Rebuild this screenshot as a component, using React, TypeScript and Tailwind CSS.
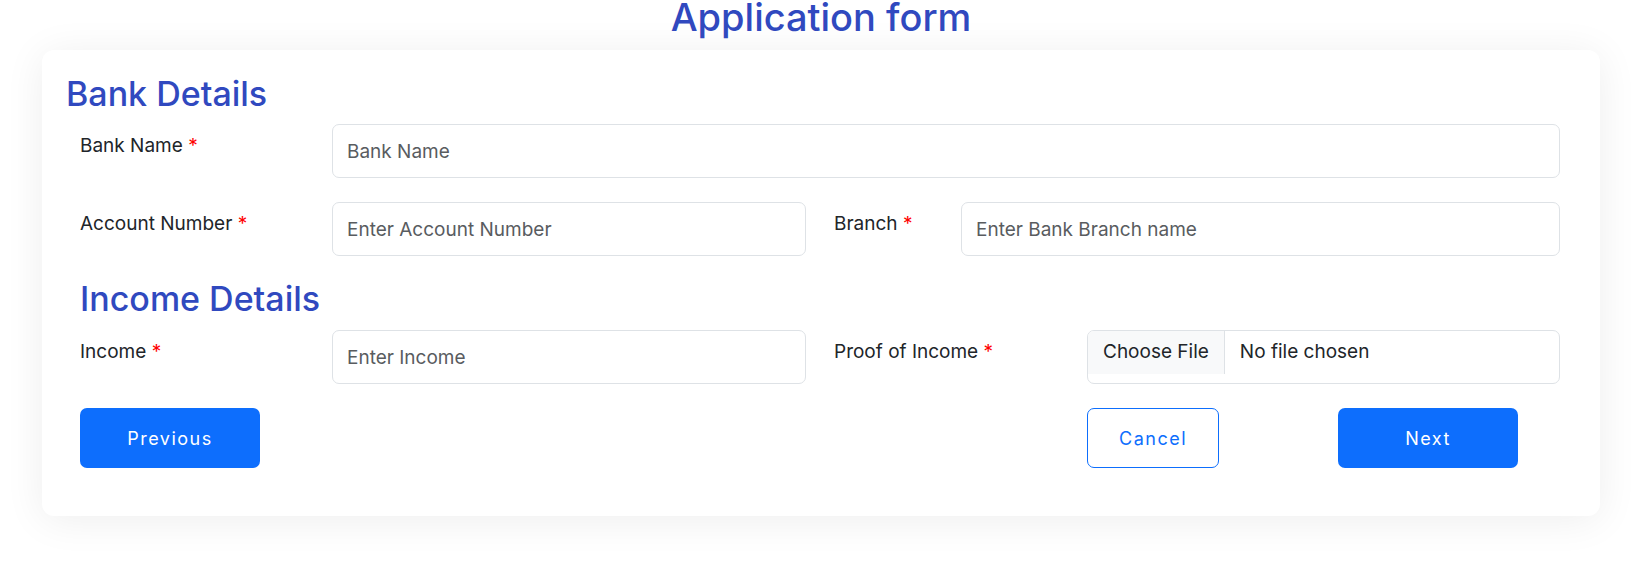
import React from 'react';

const Label: React.FC<{ text: string }> = ({ text }) => (
  <label className="pt-2 text-[19px] leading-[28.5px] text-[#212529]">
    {text} <span className="text-[#ff0000]">*</span>
  </label>
);

const Field: React.FC<{ placeholder: string }> = ({ placeholder }) => (
  <input
    type="text"
    placeholder={placeholder}
    className="h-[54px] w-full rounded-[7px] border border-[#dee2e6] bg-white px-[14px] text-[19px] text-[#212529] outline-none placeholder:text-[#595c5f]"
  />
);

const FileField: React.FC = () => (
  <div className="flex h-[54px] w-full items-start overflow-hidden rounded-[7px] border border-[#dee2e6] bg-white text-[19px] leading-[28.5px] text-[#212529]">
    <span className="border-r border-[#dee2e6] bg-[#f8f9fa] px-[15px] py-[7px]">Choose File</span>
    <span className="px-[15px] py-[7px]">No file chosen</span>
  </div>
);

export default function App() {
  return (
    <div className="min-h-screen bg-white font-['Inter','Liberation_Sans',sans-serif]">
      <h1 className="text-center text-[38px] leading-[34px] font-medium text-[#3049bf]">Application form</h1>

      <div className="mx-[42px] mt-[16px] rounded-[12px] bg-white pt-[24px] pr-[40px] pb-[48px] pl-[24px] shadow-[0_4px_40px_rgba(0,0,0,0.07)]">
        <h2 className="text-[34px] leading-[40px] font-medium text-[#3049bf]">Bank Details</h2>

        <div className="pl-[14px]">
          {/* bank name */}
          <div className="mt-[10px] grid grid-cols-[252px_1fr]">
            <Label text="Bank Name" />
            <Field placeholder="Bank Name" />
          </div>

          {/* account + branch */}
          <div className="mt-[24px] grid grid-cols-2 gap-x-[28px]">
            <div className="grid grid-cols-[252px_1fr]">
              <Label text="Account Number" />
              <Field placeholder="Enter Account Number" />
            </div>
            <div className="grid grid-cols-[127px_1fr]">
              <Label text="Branch" />
              <Field placeholder="Enter Bank Branch name" />
            </div>
          </div>

          <h2 className="mt-[23px] text-[34px] leading-[40px] font-medium text-[#3049bf]">Income Details</h2>

          <div className="mt-[11px] grid grid-cols-2 gap-x-[28px]">
            <div className="grid grid-cols-[252px_1fr]">
              <Label text="Income" />
              <Field placeholder="Enter Income" />
            </div>
            <div className="grid grid-cols-[253px_1fr]">
              <Label text="Proof of Income" />
              <FileField />
            </div>
          </div>

          {/* actions */}
          <div className="mt-[24px] grid grid-cols-2 gap-x-[28px]">
            <div>
              <button className="h-[60px] w-[180px] rounded-[7px] bg-[#0d6efd] text-[18px] tracking-[1.5px] text-white">
                Previous
              </button>
            </div>
            <div className="grid grid-cols-[253px_251px_1fr]">
              <div />
              <button className="h-[60px] w-[132px] rounded-[7px] border border-[#0d6efd] bg-white text-[18px] tracking-[1.5px] text-[#0d6efd]">
                Cancel
              </button>
              <button className="h-[60px] w-[180px] rounded-[7px] bg-[#0d6efd] text-[18px] tracking-[1.5px] text-white">
                Next
              </button>
            </div>
          </div>
        </div>
      </div>
    </div>
  );
}
